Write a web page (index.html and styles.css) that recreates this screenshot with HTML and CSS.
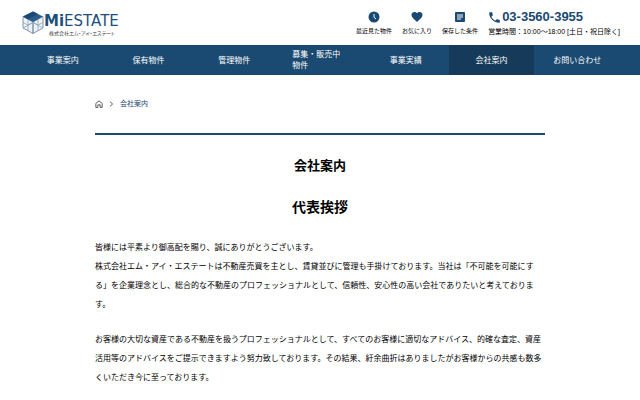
FILE: index.html
```html
<!DOCTYPE html>
<html lang="ja">
<head>
  <meta charset="UTF-8">
  <meta name="viewport" content="width=device-width, initial-scale=1.0">
  <title>会社案内 | MiESTATE</title>
  <link rel="stylesheet" href="styles.css">
</head>
<body>
  <header class="header">
    <a class="logo" href="#">
      <svg class="logo-mark" viewBox="0 0 22 24" aria-hidden="true">
        <path d="M1 6L11 11.500V23L1 17.500ZM21 6L11 11.500V23L21 17.500Z" fill="#edf2f6" stroke="#8096ab" stroke-width="1"/>
        <path d="M1 12L6 14.500L11 12L16 14.500L21 12M6 9V20.500M16 9V20.500M1 17.500L11 12L21 17.500" fill="none" stroke="#8da5ba" stroke-width=".8"/>
        <path d="M11 1L21 6L11 11.500L1 6Z" fill="#2c5c8c"/>
        <path d="M11 1L16 3.500L6 8.800L1 6Z" fill="#1d4876"/>
      </svg>
      <span class="logo-text">
        <span class="logo-name"><b>Mi</b>ESTATE</span>
        <span class="logo-sub">株式会社エム・アイ・エステート</span>
      </span>
    </a>
    <div class="header-right">
      <ul class="tools">
        <li><a href="#">
          <svg viewBox="0 0 24 24"><circle cx="12" cy="12" r="11"/><path d="M12 6V12.500L16 16" fill="none" stroke="#fff" stroke-width="2"/></svg>
          最近見た物件</a></li>
        <li><a href="#">
          <svg viewBox="0 0 24 24"><path d="M12 22L10.500 20.700C5 15.700 1 12.300 1 8C1 4.600 3.700 2 7 2C9 2 10.800 2.900 12 4.400C13.200 2.900 15 2 17 2C20.300 2 23 4.600 23 8C23 12.300 19 15.700 13.500 20.700Z"/></svg>
          お気に入り</a></li>
        <li><a href="#">
          <svg viewBox="0 0 24 24"><rect x="2" y="2" width="20" height="20" rx="2"/><path d="M6 8H18M6 12H18M6 16H14" stroke="#fff" stroke-width="2"/></svg>
          保存した条件</a></li>
      </ul>
      <div class="contact">
        <a class="tel" href="tel:03-3560-3955">
          <svg viewBox="1 1 22 22"><path d="M6.600 10.800c1.400 2.800 3.800 5.100 6.600 6.600l2.200-2.200c.3-.3.700-.4 1-.2 1.100.4 2.300.6 3.600.6.600 0 1 .4 1 1V20c0 .6-.4 1-1 1C10.600 21 3 13.400 3 4c0-.6.400-1 1-1h3.500c.6 0 1 .4 1 1 0 1.300.2 2.500.6 3.600.1.300 0 .7-.2 1z"/></svg>
          03-3560-3955</a>
        <p class="hours">営業時間：10:00～18:00 [土日・祝日除く]</p>
      </div>
    </div>
  </header>

  <nav class="nav">
    <ul>
      <li><a href="#">事業案内</a></li>
      <li><a href="#">保有物件</a></li>
      <li><a href="#">管理物件</a></li>
      <li><a href="#">募集・販売中物件</a></li>
      <li><a href="#">事業実績</a></li>
      <li class="current"><a href="#">会社案内</a></li>
      <li><a href="#">お問い合わせ</a></li>
    </ul>
  </nav>

  <main class="main">
    <div class="breadcrumb">
      <a href="#" aria-label="ホーム">
        <svg class="home" viewBox="0 0 14 14"><path d="M1.500 6L7 1.500L12.500 6V13H9V8.500H5V13H1.500Z"/></svg>
      </a>
      <svg class="arrow" viewBox="0 0 8 14"><path d="M1.500 3L6 7L1.500 11"/></svg>
      <span>会社案内</span>
    </div>
    <h1>会社案内</h1>
    <h2>代表挨拶</h2>
    <p>皆様には平素より御高配を賜り、誠にありがとうございます。<br>株式会社エム・アイ・エステートは不動産売買を主とし、賃貸並びに管理も手掛けております。当社は「不可能を可能にする」を企業理念とし、総合的な不動産のプロフェッショナルとして、信頼性、安心性の高い会社でありたいと考えております。</p>
    <p>お客様の大切な資産である不動産を扱うプロフェッショナルとして、すべてのお客様に適切なアドバイス、的確な査定、資産活用等のアドバイスをご提示できますよう努力致しております。その結果、紆余曲折はありましたがお客様からの共感も数多くいただき今に至っております。</p>
  </main>
</body>
</html>
```

FILE: styles.css
```css
* {
  box-sizing: border-box;
}
body {
  margin: 0;
  background: #fff;
  color: #000;
  font-family: "Liberation Sans", "Noto Sans CJK JP", sans-serif;
  font-size: 8px;
}
ul {
  list-style: none;
  margin: 0;
  padding: 0;
}
a {
  color: inherit;
  text-decoration: none;
}
.header {
  display: flex;
  justify-content: space-between;
  padding: 10px 20px 8px 22px;
}
.logo {
  display: flex;
}
.logo-mark {
  width: 22px;
  height: 25px;
}
.logo-text {
  display: flex;
  flex-direction: column;
  padding-top: 4px;
}
.logo-name {
  font-family: "DejaVu Sans", sans-serif;
  font-size: 15px;
  line-height: 15px;
  color: #1d4f7c;
}
.logo-sub {
  padding-left: 5px;
  font-family: "Noto Sans CJK JP", sans-serif;
  font-size: 5px;
  line-height: 7px;
  font-feature-settings: "palt";
  color: #444;
}
.header-right {
  display: flex;
  gap: 10px;
}
.tools {
  display: flex;
  gap: 10px;
}
.tools a {
  display: flex;
  flex-direction: column;
  align-items: center;
  gap: 4px;
  font-size: 6px;
  line-height: 9px;
}
.tools svg {
  width: 12px;
  height: 12px;
  margin-top: 1px;
  fill: #1a4971;
}
.tel {
  display: flex;
  align-items: center;
  gap: 1px;
  font-size: 13px;
  line-height: 14px;
  font-weight: bold;
  color: #1a4971;
}
.tel svg {
  width: 13px;
  height: 13px;
  fill: #1a4971;
}
.hours {
  margin: 2px 0 0;
  font-size: 7px;
  line-height: 11px;
}
.nav {
  background: #1a4971;
  color: #fff;
  padding: 0 20px;
}
.nav ul {
  display: flex;
}
.nav li {
  flex: 1;
}
.nav a {
  display: flex;
  align-items: center;
  justify-content: center;
  height: 30px;
  padding: 0 15px;
  line-height: 11px;
}
.nav .current {
  background: #163a5a;
}
.main {
  max-width: 450px;
  margin: 0 auto;
  padding: 24px 0 0;
}
.breadcrumb {
  display: flex;
  align-items: center;
  padding-bottom: 24px;
  border-bottom: 2px solid #1a4971;
  font-size: 7px;
  line-height: 10px;
  color: #1a4971;
}
.breadcrumb a {
  display: flex;
}
.breadcrumb svg {
  fill: none;
  stroke: #444;
  stroke-width: 1.5;
}
.home {
  width: 8px;
  height: 8px;
}
.arrow {
  width: 5px;
  height: 8px;
  margin: 0 6px;
}
h1 {
  margin: 21px 0 20px;
  font-size: 13px;
  line-height: 20px;
  text-align: center;
}
h2 {
  margin: 20px 0;
  font-size: 14px;
  line-height: 22px;
  text-align: center;
}
p {
  margin: 0;
  line-height: 19px;
}
p + p {
  margin-top: 16px;
}
```
